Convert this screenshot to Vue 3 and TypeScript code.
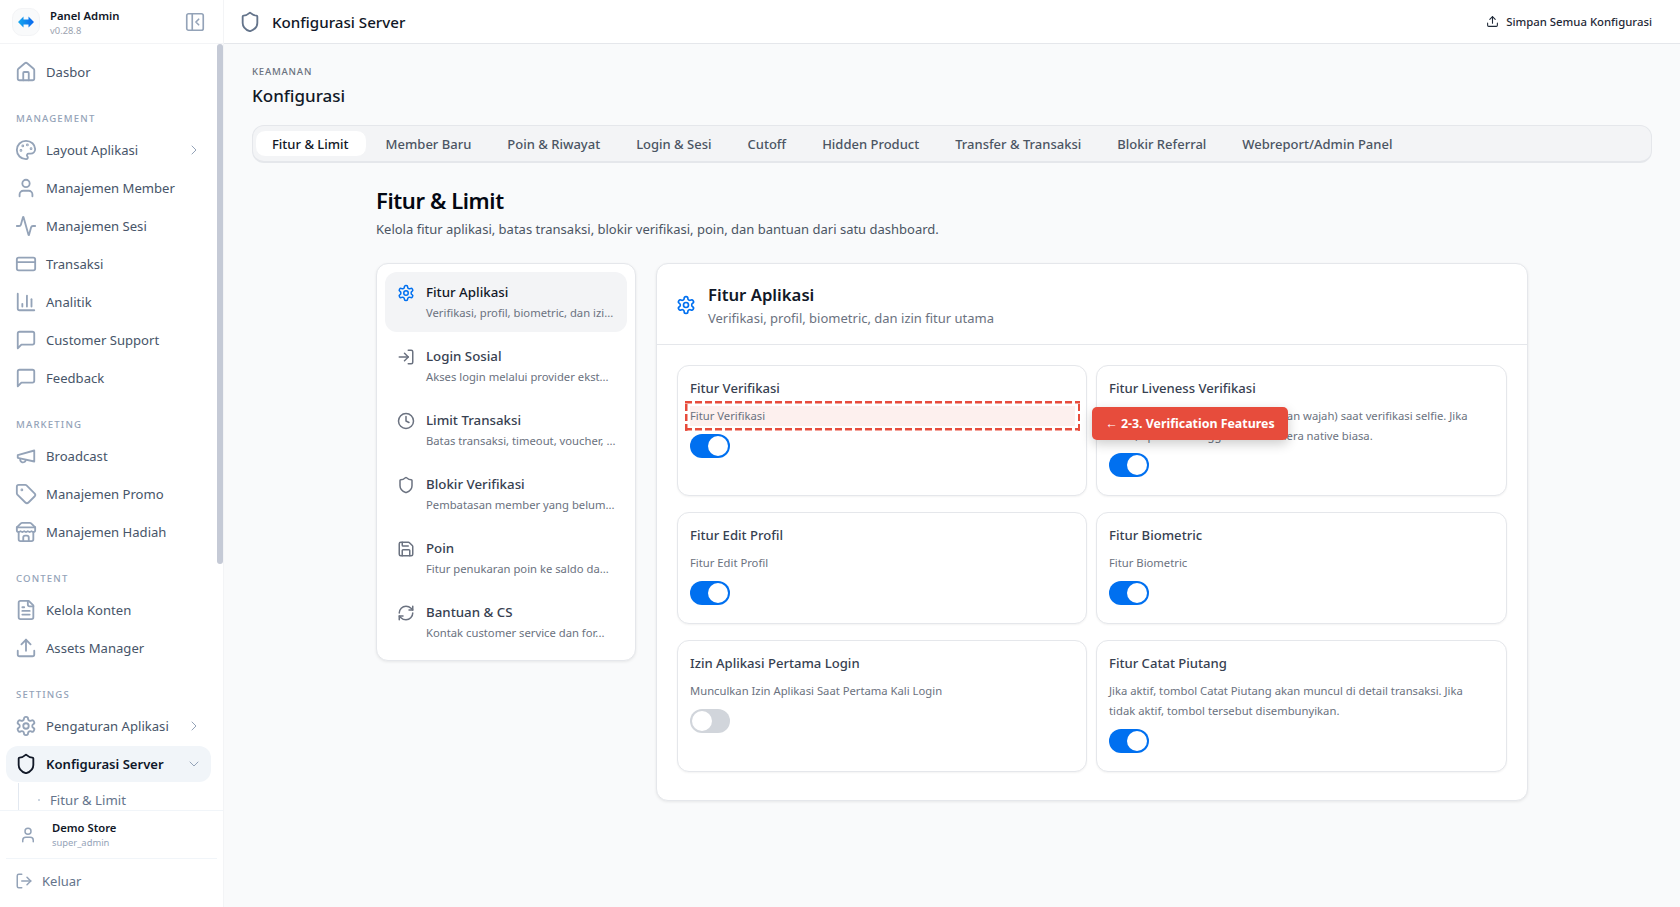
<script setup lang="ts">
const I: Record<string, string> = {
  home: '<path d="M15 21v-8a1 1 0 0 0-1-1h-4a1 1 0 0 0-1 1v8"/><path d="M3 10a2 2 0 0 1 .709-1.528l7-5.999a2 2 0 0 1 2.582 0l7 5.999A2 2 0 0 1 21 10v9a2 2 0 0 1-2 2H5a2 2 0 0 1-2-2z"/>',
  palette: '<path d="M12 22a1 1 0 0 1 0-20 10 9 0 0 1 10 9 5 5 0 0 1-5 5h-2.25a1.75 1.75 0 0 0-1.4 2.8l.3.4a1.75 1.75 0 0 1-1.4 2.8z"/><circle cx="13.5" cy="6.5" r=".5"/><circle cx="17.5" cy="10.5" r=".5"/><circle cx="6.5" cy="12.5" r=".5"/><circle cx="8.5" cy="7.5" r=".5"/>',
  user: '<path d="M19 21v-2a4 4 0 0 0-4-4H9a4 4 0 0 0-4 4v2"/><circle cx="12" cy="7" r="4"/>',
  activity: '<path d="M22 12h-2.48a2 2 0 0 0-1.93 1.46l-2.35 8.36a.25.25 0 0 1-.48 0L9.24 2.18a.25.25 0 0 0-.48 0l-2.35 8.36A2 2 0 0 1 4.49 12H2"/>',
  card: '<rect width="20" height="14" x="2" y="5" rx="2"/><line x1="2" x2="22" y1="10" y2="10"/>',
  chart: '<path d="M3 3v16a2 2 0 0 0 2 2h16"/><path d="M18 17V9"/><path d="M13 17V5"/><path d="M8 17v-3"/>',
  msg: '<path d="M21 15a2 2 0 0 1-2 2H7l-4 4V5a2 2 0 0 1 2-2h14a2 2 0 0 1 2 2z"/>',
  mega: '<path d="m3 11 18-5v12L3 14v-3z"/><path d="M11.6 16.8a3 3 0 1 1-5.8-1.6"/>',
  tag: '<path d="M12.586 2.586A2 2 0 0 0 11.172 2H4a2 2 0 0 0-2 2v7.172a2 2 0 0 0 .586 1.414l8.704 8.704a2.426 2.426 0 0 0 3.42 0l6.58-6.58a2.426 2.426 0 0 0 0-3.42z"/><circle cx="7.5" cy="7.5" r=".5"/>',
  store: '<path d="m2 7 4.41-4.41A2 2 0 0 1 7.83 2h8.34a2 2 0 0 1 1.42.59L22 7"/><path d="M4 12v8a2 2 0 0 0 2 2h12a2 2 0 0 0 2-2v-8"/><path d="M15 22v-4a2 2 0 0 0-2-2h-2a2 2 0 0 0-2 2v4"/><path d="M2 7h20"/><path d="M22 7v3a2 2 0 0 1-2 2a2.7 2.7 0 0 1-1.59-.63.7.7 0 0 0-.82 0A2.7 2.7 0 0 1 16 12a2.7 2.7 0 0 1-1.59-.63.7.7 0 0 0-.82 0A2.7 2.7 0 0 1 12 12a2.7 2.7 0 0 1-1.59-.63.7.7 0 0 0-.82 0A2.7 2.7 0 0 1 8 12a2.7 2.7 0 0 1-1.59-.63.7.7 0 0 0-.82 0A2.7 2.7 0 0 1 4 12a2 2 0 0 1-2-2V7"/>',
  file: '<path d="M15 2H6a2 2 0 0 0-2 2v16a2 2 0 0 0 2 2h12a2 2 0 0 0 2-2V7Z"/><path d="M14 2v4a2 2 0 0 0 2 2h4"/><path d="M10 9H8"/><path d="M16 13H8"/><path d="M16 17H8"/>',
  upload: '<path d="M21 15v4a2 2 0 0 1-2 2H5a2 2 0 0 1-2-2v-4"/><polyline points="17 8 12 3 7 8"/><line x1="12" x2="12" y1="3" y2="15"/>',
  gear: '<path d="M12.22 2h-.44a2 2 0 0 0-2 2v.18a2 2 0 0 1-1 1.73l-.43.25a2 2 0 0 1-2 0l-.15-.08a2 2 0 0 0-2.73.73l-.22.38a2 2 0 0 0 .73 2.73l.15.1a2 2 0 0 1 1 1.72v.51a2 2 0 0 1-1 1.74l-.15.09a2 2 0 0 0-.73 2.73l.22.38a2 2 0 0 0 2.73.73l.15-.08a2 2 0 0 1 2 0l.43.25a2 2 0 0 1 1 1.73V20a2 2 0 0 0 2 2h.44a2 2 0 0 0 2-2v-.18a2 2 0 0 1 1-1.73l.43-.25a2 2 0 0 1 2 0l.15.08a2 2 0 0 0 2.73-.73l.22-.39a2 2 0 0 0-.73-2.73l-.15-.08a2 2 0 0 1-1-1.74v-.5a2 2 0 0 1 1-1.74l.15-.09a2 2 0 0 0 .73-2.73l-.22-.38a2 2 0 0 0-2.73-.73l-.15.08a2 2 0 0 1-2 0l-.43-.25a2 2 0 0 1-1-1.73V4a2 2 0 0 0-2-2z"/><circle cx="12" cy="12" r="3"/>',
  shield: '<path d="M20 13c0 5-3.5 7.5-7.66 8.95a1 1 0 0 1-.67-.01C7.5 20.5 4 18 4 13V6a1 1 0 0 1 1-1c2 0 4.5-1.2 6.24-2.72a1.17 1.17 0 0 1 1.52 0C14.51 3.81 17 5 19 5a1 1 0 0 1 1 1z"/>',
  logout: '<path d="M9 21H5a2 2 0 0 1-2-2V5a2 2 0 0 1 2-2h4"/><polyline points="16 17 21 12 16 7"/><line x1="21" x2="9" y1="12" y2="12"/>',
  login: '<path d="M15 3h4a2 2 0 0 1 2 2v14a2 2 0 0 1-2 2h-4"/><polyline points="10 17 15 12 10 7"/><line x1="15" x2="3" y1="12" y2="12"/>',
  clock: '<circle cx="12" cy="12" r="10"/><polyline points="12 6 12 12 16 14"/>',
  save: '<path d="M15.2 3a2 2 0 0 1 1.4.6l3.8 3.8a2 2 0 0 1 .6 1.4V19a2 2 0 0 1-2 2H5a2 2 0 0 1-2-2V5a2 2 0 0 1 2-2z"/><path d="M17 21v-7a1 1 0 0 0-1-1H8a1 1 0 0 0-1 1v7"/><path d="M7 3v4a1 1 0 0 0 1 1h7"/>',
  refresh: '<path d="M3 12a9 9 0 0 1 9-9 9.75 9.75 0 0 1 6.74 2.74L21 8"/><path d="M21 3v5h-5"/><path d="M21 12a9 9 0 0 1-9 9 9.75 9.75 0 0 1-6.74-2.74L3 16"/><path d="M8 16H3v5"/>',
  panel: '<rect width="18" height="18" x="3" y="3" rx="2"/><path d="M9 3v18"/><path d="m16 15-3-3 3-3"/>',
  right: '<path d="m9 18 6-6-6-6"/>',
  down: '<path d="m6 9 6 6 6-6"/>',
}

interface NavItem { label: string; icon: string; chevron?: boolean }
interface NavGroup { title?: string; items: NavItem[] }

const groups: NavGroup[] = [
  { items: [{ label: 'Dasbor', icon: 'home' }] },
  {
    title: 'Management',
    items: [
      { label: 'Layout Aplikasi', icon: 'palette', chevron: true },
      { label: 'Manajemen Member', icon: 'user' },
      { label: 'Manajemen Sesi', icon: 'activity' },
      { label: 'Transaksi', icon: 'card' },
      { label: 'Analitik', icon: 'chart' },
      { label: 'Customer Support', icon: 'msg' },
      { label: 'Feedback', icon: 'msg' },
    ],
  },
  {
    title: 'Marketing',
    items: [
      { label: 'Broadcast', icon: 'mega' },
      { label: 'Manajemen Promo', icon: 'tag' },
      { label: 'Manajemen Hadiah', icon: 'store' },
    ],
  },
  {
    title: 'Content',
    items: [
      { label: 'Kelola Konten', icon: 'file' },
      { label: 'Assets Manager', icon: 'upload' },
    ],
  },
]

const tabs = ['Fitur & Limit', 'Member Baru', 'Poin & Riwayat', 'Login & Sesi', 'Cutoff', 'Hidden Product', 'Transfer & Transaksi', 'Blokir Referral', 'Webreport/Admin Panel']

const sections = [
  { icon: 'gear', title: 'Fitur Aplikasi', desc: 'Verifikasi, profil, biometric, dan izi...' },
  { icon: 'login', title: 'Login Sosial', desc: 'Akses login melalui provider ekst...' },
  { icon: 'clock', title: 'Limit Transaksi', desc: 'Batas transaksi, timeout, voucher, ...' },
  { icon: 'shield', title: 'Blokir Verifikasi', desc: 'Pembatasan member yang belum...' },
  { icon: 'save', title: 'Poin', desc: 'Fitur penukaran poin ke saldo da...' },
  { icon: 'refresh', title: 'Bantuan & CS', desc: 'Kontak customer service dan for...' },
]

const features = [
  { title: 'Fitur Verifikasi', desc: 'Fitur Verifikasi', on: true, mark: true },
  { title: 'Fitur Liveness Verifikasi', desc: 'Jika aktif, wajib tes liveness (gerakan wajah) saat verifikasi selfie. Jika tidak, aplikasi menggunakan kamera native biasa.', on: true },
  { title: 'Fitur Edit Profil', desc: 'Fitur Edit Profil', on: true },
  { title: 'Fitur Biometric', desc: 'Fitur Biometric', on: true },
  { title: 'Izin Aplikasi Pertama Login', desc: 'Munculkan Izin Aplikasi Saat Pertama Kali Login', on: false },
  { title: 'Fitur Catat Piutang', desc: 'Jika aktif, tombol Catat Piutang akan muncul di detail transaksi. Jika tidak aktif, tombol tersebut disembunyikan.', on: true },
]
</script>

<template>
  <div class="app">
    <aside class="sidebar">
      <div class="brand">
        <div class="logo">
          <svg viewBox="0 0 16 12" width="16" height="12">
            <defs>
              <linearGradient id="logoGrad" x1="0" y1="0" x2="1" y2="0">
                <stop offset="0" stop-color="#16a9ee" />
                <stop offset="1" stop-color="#0a66ee" />
              </linearGradient>
            </defs>
            <path d="M0 6 5.5 .5V3.6h5V.5L16 6l-5.5 5.5V8.4h-5v3.1z" fill="url(#logoGrad)" />
          </svg>
        </div>
        <div class="brand-text">
          <div class="brand-name">Panel Admin</div>
          <div class="brand-ver">v0.28.8</div>
        </div>
        <svg class="ico collapse" viewBox="0 0 24 24" v-html="I.panel"></svg>
      </div>

      <nav class="nav">
        <div v-for="g in groups" :key="g.title ?? 'top'" class="group">
          <div v-if="g.title" class="group-title">{{ g.title }}</div>
          <a v-for="it in g.items" :key="it.label" class="nav-item">
            <svg class="ico" viewBox="0 0 24 24" v-html="I[it.icon]"></svg>
            <span class="nav-label">{{ it.label }}</span>
            <svg v-if="it.chevron" class="ico chev" viewBox="0 0 24 24" v-html="I.right"></svg>
          </a>
        </div>
        <div class="group">
          <div class="group-title">Settings</div>
          <a class="nav-item">
            <svg class="ico" viewBox="0 0 24 24" v-html="I.gear"></svg>
            <span class="nav-label">Pengaturan Aplikasi</span>
            <svg class="ico chev" viewBox="0 0 24 24" v-html="I.right"></svg>
          </a>
          <a class="nav-item active">
            <svg class="ico" viewBox="0 0 24 24" v-html="I.shield"></svg>
            <span class="nav-label">Konfigurasi Server</span>
            <svg class="ico chev" viewBox="0 0 24 24" v-html="I.down"></svg>
          </a>
          <div class="sub">
            <a class="sub-item"><i class="dot"></i>Fitur &amp; Limit</a>
          </div>
        </div>
        <div class="scrollbar"></div>
      </nav>

      <div class="account">
        <svg class="ico acc-ico" viewBox="0 0 24 24" v-html="I.user"></svg>
        <div>
          <div class="acc-name">Demo Store</div>
          <div class="acc-role">super_admin</div>
        </div>
      </div>
      <a class="logout">
        <svg class="ico" viewBox="0 0 24 24" v-html="I.logout"></svg>
        <span>Keluar</span>
      </a>
    </aside>

    <div class="main">
      <header class="topbar">
        <svg class="ico top-ico" viewBox="0 0 24 24" v-html="I.shield"></svg>
        <h1 class="top-title">Konfigurasi Server</h1>
        <button class="save">
          <svg class="ico save-ico" viewBox="0 0 24 24" v-html="I.upload"></svg>
          Simpan Semua Konfigurasi
        </button>
      </header>

      <main class="content">
        <div class="eyebrow">Keamanan</div>
        <h2 class="page-title">Konfigurasi</h2>

        <div class="tabs">
          <button v-for="(t, i) in tabs" :key="t" class="tab" :class="{ on: i === 0 }">{{ t }}</button>
        </div>

        <div class="wrap">
          <h3 class="wrap-title">Fitur &amp; Limit</h3>
          <p class="wrap-desc">Kelola fitur aplikasi, batas transaksi, blokir verifikasi, poin, dan bantuan dari satu dashboard.</p>

          <div class="columns">
            <div class="side-card">
              <a v-for="(s, i) in sections" :key="s.title" class="sec" :class="{ on: i === 0 }">
                <svg class="ico sec-ico" viewBox="0 0 24 24" v-html="I[s.icon]"></svg>
                <div class="sec-text">
                  <div class="sec-title">{{ s.title }}</div>
                  <div class="sec-desc">{{ s.desc }}</div>
                </div>
              </a>
            </div>

            <section class="panel">
              <div class="panel-head">
                <svg class="ico panel-ico" viewBox="0 0 24 24" v-html="I.gear"></svg>
                <div>
                  <div class="panel-title">Fitur Aplikasi</div>
                  <div class="panel-desc">Verifikasi, profil, biometric, dan izin fitur utama</div>
                </div>
              </div>
              <div class="grid">
                <div v-for="f in features" :key="f.title" class="feat">
                  <div class="feat-title">{{ f.title }}</div>
                  <div class="feat-desc" :class="{ mark: f.mark }">{{ f.desc }}</div>
                  <span class="toggle" :class="{ on: f.on }"><i class="knob"></i></span>
                  <div v-if="f.mark" class="callout">← 2-3. Verification Features</div>
                </div>
              </div>
            </section>
          </div>
        </div>
      </main>
    </div>
  </div>
</template>

<style>
html, body { margin: 0; background: #f9fafb; }
</style>

<style scoped>
* { box-sizing: border-box; }
.app {
  display: flex;
  height: 907px;
  overflow: hidden;
  font-family: "Noto Sans", "Open Sans", sans-serif;
  color: #111827;
}
.ico {
  width: 22px;
  height: 22px;
  flex: none;
  fill: none;
  stroke: currentColor;
  stroke-width: 2;
  stroke-linecap: round;
  stroke-linejoin: round;
}
.sidebar {
  width: 224px;
  flex: none;
  background: #fff;
  border-right: 1px solid #f3f4f6;
  display: flex;
  flex-direction: column;
}
.brand {
  height: 44px;
  flex: none;
  display: flex;
  align-items: center;
  padding: 0 17px 0 12px;
  border-bottom: 1px solid #f3f4f6;
}
.logo {
  width: 28px;
  height: 28px;
  border-radius: 10px;
  background: #f9fafb;
  border: 1px solid #f3f4f6;
  display: flex;
  align-items: center;
  justify-content: center;
}
.brand-text { margin-left: 10px; flex: 1; padding-top: 1px; }
.brand-name { font-size: 11.3px; font-weight: 600; line-height: 16px; color: #111827; }
.brand-ver { font-size: 9.4px; line-height: 13px; color: #9ca3af; }
.collapse { color: #94a3b8; stroke-width: 1.8; }

.nav { flex: 1; min-height: 0; overflow: hidden; position: relative; padding-top: 9px; }
.scrollbar {
  position: absolute;
  top: 0;
  right: 0;
  width: 6px;
  height: 520px;
  background: #c5cad6;
  border-radius: 3px;
}
.group { margin-bottom: 20px; }
.group-title {
  font-size: 9.6px;
  line-height: 14px;
  font-weight: 500;
  letter-spacing: 0.12em;
  text-transform: uppercase;
  color: #94a3b8;
  padding: 1px 16px 0;
  margin-bottom: 5px;
}
.nav-item {
  display: flex;
  align-items: center;
  height: 38px;
  margin: 0 12px 0 6px;
  padding: 0 9px 0 9px;
  border-radius: 12px;
  color: #475569;
  font-size: 13.1px;
}
.nav-item .ico { color: #94a3b8; }
.nav-label { margin-left: 9px; flex: 1; white-space: nowrap; }
.nav-item .chev { width: 16px; height: 16px; stroke-width: 1.5; }
.nav-item.active { background: #f1f5f9; color: #0f172a; font-weight: 600; height: 36px; margin-top: 1px; margin-bottom: 1px; }
.nav-item.active > .ico:first-child { color: #111827; }
.sub { margin-left: 18px; border-left: 1px solid #e2e8f0; padding-left: 19px; }
.sub-item { display: flex; align-items: center; height: 34px; font-size: 13.2px; color: #64748b; position: relative; padding-left: 12px; }
.dot { position: absolute; left: 0; top: 16px; width: 2px; height: 2px; background: #cbd5e1; }

.account {
  flex: none;
  height: 48px;
  display: flex;
  align-items: center;
  gap: 15px;
  padding: 0 19px;
  border-top: 1px solid #f1f5f9;
}
.acc-ico { width: 18px; height: 18px; color: #94a3b8; }
.acc-name { font-size: 11.25px; font-weight: 600; line-height: 16px; color: #111827; }
.acc-role { font-size: 9.4px; line-height: 14px; color: #94a3b8; }
.logout {
  flex: none;
  margin: 0 6px;
  width: 211px;
  height: 49px;
  border-top: 1px solid #f1f5f9;
  display: flex;
  align-items: center;
  gap: 9px;
  padding: 0 0 5px 9px;
  font-size: 13px;
  color: #64748b;
}
.logout .ico { width: 18px; height: 18px; color: #94a3b8; }

.main { flex: 1; min-width: 0; display: flex; flex-direction: column; }
.topbar {
  height: 44px;
  flex: none;
  background: #fff;
  border-bottom: 1px solid #e5e7eb;
  display: flex;
  align-items: center;
  padding: 0 28px 0 15px;
}
.top-ico { color: #64748b; }
.top-title { margin: 0 0 0 11px; flex: 1; font-size: 15.15px; font-weight: 500; color: #111827; }
.save {
  display: flex;
  align-items: center;
  gap: 7px;
  border: 0;
  background: none;
  padding: 0;
  font: 500 11.35px "Noto Sans", sans-serif;
  color: #1f2937;
}
.save-ico { width: 13px; height: 13px; }

.content { flex: 1; padding: 21px 28px 0; }
.eyebrow { font-size: 9.6px; line-height: 14px; font-weight: 500; letter-spacing: 0.08em; text-transform: uppercase; color: #6b7280; }
.page-title { margin: 3px 0 0; font-size: 17px; line-height: 28px; font-weight: 500; color: #111827; }
.tabs {
  margin-top: 15px;
  height: 38px;
  display: flex;
  align-items: center;
  gap: 2px;
  padding: 0 2px;
  background: #f3f4f6;
  border: 1px solid #e5e7eb;
  border-bottom-width: 2px;
  border-radius: 12px;
}
.tab {
  height: 27px;
  padding: 0 16px;
  border: 1px solid transparent;
  background: none;
  border-radius: 10px;
  font: 500 13px "Noto Sans", sans-serif;
  color: #4b5563;
  white-space: nowrap;
}
.tab.on { background: #fff; color: #111827; border-color: #f3f4f6; padding-right: 17px; }

.wrap { width: 1152px; margin: 19px auto 0; }
.wrap-title { margin: 0; font-size: 22px; line-height: 36px; font-weight: 600; letter-spacing: -0.4px; color: #030712; }
.wrap-desc { margin: 1px 0 0; font-size: 13px; line-height: 20px; color: #4b5563; }
.columns { display: flex; align-items: flex-start; gap: 20px; margin-top: 24px; }
.side-card {
  width: 260px;
  flex: none;
  background: #fff;
  border: 1px solid #e5e7eb;
  border-radius: 12px;
  box-shadow: 0 1px 3px rgba(0, 0, 0, 0.08);
  padding: 8px 8px 8px;
}
.sec { display: flex; height: 60px; margin-bottom: 4px; padding: 10px 12px 0 11.5px; border-radius: 12px; gap: 11.5px; }
.sec:last-child { margin-bottom: 0; }
.sec.on { background: #f3f4f6; }
.sec-ico { width: 18px; height: 18px; margin-top: 2px; color: #6b7280; }
.sec.on .sec-ico { color: #0070f0; }
.sec-text { min-width: 0; flex: 1; }
.sec-title { font-size: 13.3px; line-height: 20px; font-weight: 500; color: #374151; }
.sec.on .sec-title { color: #111827; }
.sec-desc { margin-top: 1px; font-size: 11.25px; line-height: 20px; color: #6b7280; white-space: nowrap; }

.panel {
  flex: 1;
  min-width: 0;
  background: #fff;
  border: 1px solid #e5e7eb;
  border-radius: 12px;
  box-shadow: 0 1px 3px rgba(0, 0, 0, 0.08);
}
.panel-head {
  height: 81px;
  display: flex;
  align-items: center;
  gap: 12px;
  padding: 2px 19px 0;
  border-bottom: 1px solid #e5e7eb;
}
.panel-ico { color: #0070f0; width: 20px; height: 20px; }
.panel-title { font-size: 16.7px; line-height: 26px; font-weight: 600; color: #111827; }
.panel-desc { font-size: 13px; line-height: 20px; color: #6b7280; }
.grid {
  display: grid;
  grid-template-columns: 410px 1fr;
  column-gap: 9px;
  row-gap: 16px;
  padding: 20px 20px 28px;
}
.feat {
  position: relative;
  background: #fff;
  border: 1px solid #e5e7eb;
  border-radius: 12px;
  box-shadow: 0 1px 2px rgba(0, 0, 0, 0.05);
  padding: 12px 12px 18px;
}
.feat-title { font-size: 13.1px; line-height: 20px; font-weight: 500; color: #374151; }
.feat-desc { margin-top: 8px; padding-right: 4px; font-size: 11.25px; line-height: 19.7px; color: #6b7280; }
.feat-desc.mark { position: relative; padding-right: 0; margin-right: -1px; background: #fdf0ee; }
.feat-desc.mark::after {
  content: "";
  position: absolute;
  inset: -5px;
  pointer-events: none;
  background:
    repeating-linear-gradient(90deg, #e74c3c 0 7px, transparent 7px 10px) top / 100% 2.5px no-repeat,
    repeating-linear-gradient(90deg, #e74c3c 0 7px, transparent 7px 10px) bottom / 100% 2.5px no-repeat,
    repeating-linear-gradient(0deg, #e74c3c 0 7px, transparent 7px 10px) left / 2.5px 100% no-repeat,
    repeating-linear-gradient(0deg, #e74c3c 0 7px, transparent 7px 10px) right / 2.5px 100% no-repeat;
}
.toggle {
  display: block;
  width: 40px;
  height: 24px;
  margin-top: 8px;
  border-radius: 12px;
  background: #d1d5db;
  position: relative;
}
.toggle.on { background: #0070f0; }
.knob {
  position: absolute;
  top: 2px;
  left: 2px;
  width: 20px;
  height: 20px;
  border-radius: 50%;
  background: #fff;
}
.toggle.on .knob { left: 18px; }
.callout {
  position: absolute;
  left: 414px;
  top: 41px;
  width: 196px;
  height: 33px;
  display: flex;
  align-items: center;
  justify-content: center;
  background: #e74c3c;
  color: #fff;
  border-radius: 5px;
  font-size: 12.4px;
  font-weight: 700;
  white-space: nowrap;
  box-shadow: 0 4px 12px rgba(0, 0, 0, 0.2);
  z-index: 2;
}
</style>
